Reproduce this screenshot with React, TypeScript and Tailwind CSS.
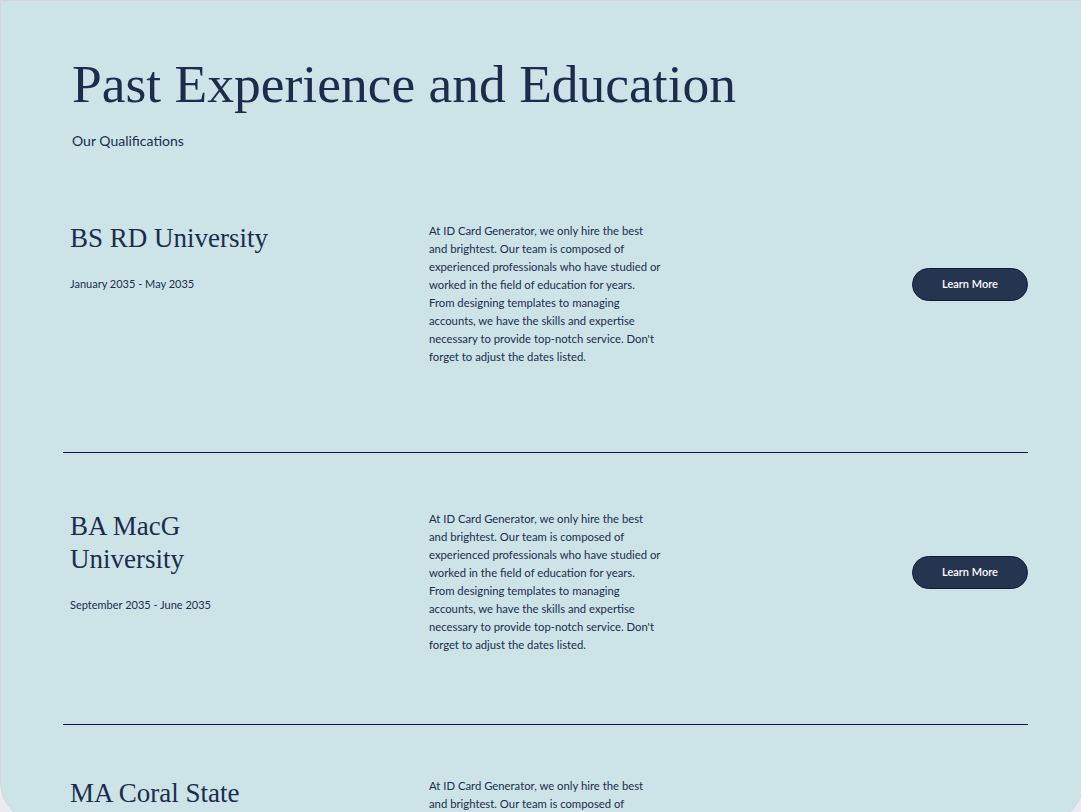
import React from 'react';

interface Entry {
  title: string;
  dates: string;
  pad: string;
  height: string;
}

// line breaks follow the reference layout
const blurbLines = [
  'At ID Card Generator, we only hire the best',
  'and brightest. Our team is composed of',
  'experienced professionals who have studied or',
  'worked in the field of education for years.',
  'From designing templates to managing',
  'accounts, we have the skills and expertise',
  "necessary to provide top-notch service. Don't",
  'forget to adjust the dates listed.',
];

const serif = { fontFamily: '"Liberation Serif", "DejaVu Serif", serif' };
const sans = { fontFamily: 'Lato, "Noto Sans", sans-serif' };

const entries: Entry[] = [
  { title: 'BS RD University', dates: 'January 2035 - May 2035', pad: 'pt-[0px]', height: 'h-[231px]' },
  { title: 'BA MacG University', dates: 'September 2035 - June 2035', pad: 'pt-[57px]', height: 'h-[272px]' },
  { title: 'MA Coral State', dates: 'September 2036 - June 2037', pad: 'pt-[52px]', height: 'h-[272px]' },
];

const Row: React.FC<{ entry: Entry; last: boolean }> = ({ entry, last }) => (
  <div className={`${entry.height} ${entry.pad} ${last ? '' : 'border-b border-[#0f1440]'}`}>
    <div className="flex items-start">
      <div className="w-[366px] pl-[7px]">
        <h3 className="w-[210px] text-[27px] leading-[33px] text-[#1b2d4b]" style={serif}>
          {entry.title}
        </h3>
        <p className="mt-[22px] text-[11px] leading-[14px] text-[#1b2d4b]" style={sans}>
          {entry.dates}
        </p>
      </div>
      <p className="w-[240px] text-[11.3px] leading-[18px] text-[#1b2d4b]" style={sans}>
        {blurbLines.map((l, i) => (
          <span key={i} className="block whitespace-nowrap">
            {l}
          </span>
        ))}
      </p>
      <div className="ml-auto flex items-center h-[124px]">
        <button
          className="w-[116px] h-[33px] rounded-full bg-[#26354f] border border-[#0f1a36] text-white text-[11px] font-semibold"
          style={sans}
        >
          Learn More
        </button>
      </div>
    </div>
  </div>
);

const App: React.FC = () => {
  return (
    <div className="h-[812px] w-[1081px] overflow-hidden bg-[#ebebf1]">
      <div className="w-[1084px] h-[822px] bg-[#cce4e8] border border-[#d4d4dc] rounded-b-[40px] pl-[62px] pr-[55px]">
        {/* Header */}
        <div className="pt-[54px] pl-[9px]">
          <h1 className="text-[53.5px] leading-[58px] text-[#1b2d4b]" style={serif}>
            Past Experience and Education
          </h1>
          <p className="mt-[19px] text-[14px] leading-[18px] text-[#1b2d4b]" style={sans}>
            Our Qualifications
          </p>
        </div>

        {/* Entries */}
        <div className="mt-[72px]">
          {entries.map((e, i) => (
            <Row key={i} entry={e} last={i === entries.length - 1} />
          ))}
        </div>
      </div>
    </div>
  );
};

export default App;
